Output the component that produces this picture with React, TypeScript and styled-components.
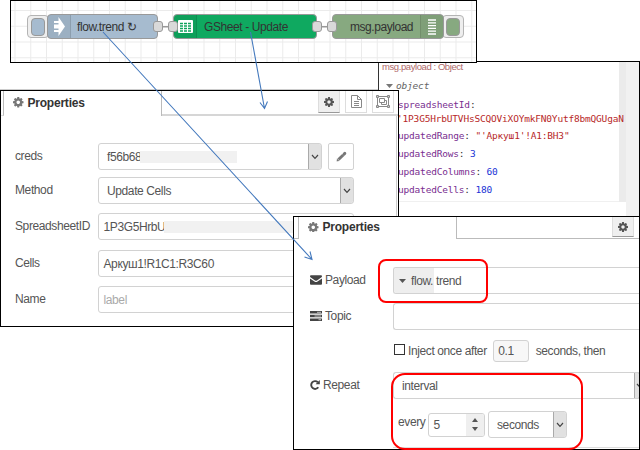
import React from 'react';
import styled, { createGlobalStyle, css } from 'styled-components';

const Global = createGlobalStyle`
  * { box-sizing: border-box; }
  body { margin: 0; background: #fff; font-family: "Liberation Sans", Arial, sans-serif; }
`;

const Desktop = styled.main`
  position: relative;
  width: 640px;
  height: 450px;
  overflow: hidden;
  background: #fff;
  color: #555;
  font-size: 12px;
`;

/* ---------- windows ---------- */

const Win = styled.section<{ $x: number; $y: number; $w: number; $h: number }>`
  position: absolute;
  isolation: isolate;
  left: ${p => p.$x}px;
  top: ${p => p.$y}px;
  width: ${p => p.$w}px;
  height: ${p => p.$h}px;
  overflow: hidden;
  border: 1px solid #000;
  background: #fff;
`;

const Console = styled(Win)`
  display: flex;
  border-left: 1px solid #333;
`;

const Backline = styled.div`
  width: 378px;
  height: 90px;
  border-bottom: 1px solid #ccc;
`;

const Text = styled.span<{ $ls?: number }>`
  font-size: 12px;
  letter-spacing: ${p => p.$ls ?? -0.39}px;
  line-height: 16px;
  white-space: pre;
`;

/* ---------- flow canvas ---------- */

const Canvas = styled(Win)`
  background-image:
    linear-gradient(90deg, #ebebeb 1px, transparent 1px),
    linear-gradient(180deg, #ebebeb 1px, transparent 1px);
  background-size: 15.75px 15.75px;
  background-position: 3.5px 9px;
`;

const Flow = styled.div`
  display: flex;
  align-items: center;
  height: 25px;
  margin: 13px 0 0 16px;
`;

const NodeButton = styled.div<{ $side: 'left' | 'right'; $c: string }>`
  width: 22px;
  height: 23px;
  border: 1.5px solid #b4b4b4;
  border-radius: 4px;
  background: #eee;
  display: flex;
  align-items: center;
  padding: 0 3px;
  justify-content: ${p => (p.$side === 'left' ? 'flex-start' : 'flex-end')};
  ${p => (p.$side === 'left' ? css`margin-right: -2px;` : css`margin-left: -2px;`)}
  &::after {
    content: '';
    width: 14px;
    height: 16px;
    border: 1px solid #999;
    border-radius: 4px;
    background: ${p => p.$c};
  }
`;

const Node = styled.div<{ $w: number; $c: string }>`
  position: relative;
  z-index: 1;
  flex: none;
  display: flex;
  align-items: center;
  width: ${p => p.$w}px;
  height: 25px;
  overflow: hidden;
  border: 1.5px solid #999;
  border-radius: 4px;
  background: ${p => p.$c};
  color: #333;
`;

const NodeIcon = styled.div<{ $right?: boolean }>`
  flex: none;
  display: flex;
  align-items: center;
  justify-content: center;
  width: 23px;
  height: 100%;
  background: rgba(0, 0, 0, 0.06);
  ${p => (p.$right ? 'border-left' : 'border-right')}: 1px solid rgba(0, 0, 0, 0.1);
`;

const NodeLabel = styled(Text)<{ $pad: number }>`
  flex: 1;
  padding-left: ${p => p.$pad}px;
`;

const Wire = styled.div`
  position: relative;
  z-index: 2;
  flex: none;
  display: flex;
  align-items: center;
  justify-content: space-between;
  width: 25px;
  height: 9px;
  margin: 0 -5px;
  background: linear-gradient(#999, #999) 0 4px / 100% 1.5px no-repeat;
  &::before, &::after {
    content: '';
    width: 8px;
    height: 9px;
    border: 1px solid #999;
    border-radius: 3px;
    background: #d9d9d9;
  }
`;

/* ---------- debug output ---------- */

const Log = styled.div`
  position: relative;
  z-index: 1;
  flex: none;
  width: 240px;
  height: 140px;
  padding-left: 3px;
  border-bottom: 1px solid #f0f0f0;
`;
const LogTitle = styled.div`
  height: 14px;
  margin-top: -3px;
  padding-top: 1px;
  color: #b06a6a;
  font-size: 9.5px;
  line-height: 14px;
  letter-spacing: -0.42px;
`;
const Mono = styled.div<{ $h: number; $indent?: number }>`
  height: ${p => p.$h}px;
  line-height: ${p => p.$h}px;
  padding-left: ${p => p.$indent ?? 9.5}px;
  font-family: "DejaVu Sans Mono", monospace;
  font-size: 9.5px;
  letter-spacing: -0.19px;
  white-space: pre;
  color: #333;
`;
const Key = styled.span`color: #792e90;`;
const Str = styled.span`color: #b72828;`;
const Num = styled.span`color: #2033d6;`;
const IdValue = styled(Mono)`
  margin-bottom: 2px;
`;
const ObjectRow = styled(Mono)`
  display: flex;
  align-items: center;
  gap: 3px;
`;
const ObjectName = styled.i`color: #666;`;
const LogEdge = styled.div`
  width: 7px;
  height: 140px;
  background: #ebebeb;
`;
const LogScroll = styled.div`
  width: 13px;
  background: #f1f1f1;
`;

/* ---------- property sheets ---------- */

const TabBar = styled.header<{ $h: number; $lead: number; $line: string }>`
  display: flex;
  height: ${p => p.$h}px;
  &::before {
    content: '';
    flex: none;
    width: ${p => p.$lead}px;
    border-right: 1px solid #bbb;
    border-bottom: 1px solid ${p => p.$line};
  }
`;
const Tab = styled.div<{ $w: number }>`
  flex: none;
  display: flex;
  align-items: center;
  gap: 4px;
  width: ${p => p.$w}px;
  padding: 0 0 2px 9px;
  border-right: 1px solid #bbb;
  color: #333;
  font-weight: bold;
`;
const TabTools = styled.div<{ $line: string; $pad: number; $thick?: boolean }>`
  flex: 1;
  display: flex;
  justify-content: flex-end;
  gap: 5px;
  padding-right: ${p => p.$pad}px;
  border-bottom: ${p => (p.$thick ? 2 : 1)}px solid ${p => p.$line};
`;
const Tool = styled.div<{ $active?: boolean; $h?: number }>`
  display: flex;
  align-items: center;
  justify-content: center;
  width: 22px;
  height: ${p => p.$h ?? 22}px;
  border: 1px solid #ddd;
  border-top: 0;
  background: #fff;
  ${p => p.$active && css`background: #efefef; border-bottom: 1px solid #999;`}
`;
const Form = styled.div<{ $pad: string }>`
  display: flex;
  flex-direction: column;
  padding: ${p => p.$pad};
`;
const SheetEdge = styled(Win)`
  & > ${Form} {
    height: 100%;
    margin-right: 1px;
    border-right: 1px solid #ccc;
  }
`;
const Row = styled.div<{ $gap: number; $label: number }>`
  flex: none;
  display: grid;
  grid-template-columns: ${p => p.$label}px 1fr;
  align-items: center;
  height: 27px;
  margin-bottom: ${p => p.$gap}px;
`;
const Caption = styled.label`
  display: flex;
  align-items: center;
  gap: 3px;
  padding-bottom: 2px;
`;
const Controls = styled.div`
  display: flex;
  align-items: center;
`;
const Box = styled.div<{ $w?: number; $h?: number; $pad?: number; $open?: boolean }>`
  flex: ${p => (p.$w ? 'none' : 1)};
  display: flex;
  align-items: center;
  width: ${p => (p.$w ? `${p.$w}px` : 'auto')};
  height: ${p => p.$h ?? 27}px;
  padding-left: ${p => p.$pad ?? 4.5}px;
  border: 1px solid #d2d2d2;
  border-radius: 3px;
  background: #fff;
  overflow: hidden;
  ${p => p.$open && css`border-right: 0; border-radius: 3px 0 0 3px;`}
`;
const Redaction = styled.div<{ $w: number }>`
  width: ${p => p.$w}px;
  height: 12px;
  margin-left: -1px;
  background: #f1f1f1;
`;
const Arrow = styled.div<{ $w?: number }>`
  flex: none;
  display: flex;
  align-items: center;
  justify-content: ${p => (p.$w ? 'flex-start' : 'center')};
  width: ${p => p.$w ?? 14}px;
  height: calc(100% + 2px);
  margin: -1px -1px -1px auto;
  border: 1px solid #aaa;
  border-radius: 0 2px 2px 0;
  background: #e1e1e1;
  overflow: hidden;
  & > svg { flex: none; ${p => p.$w && 'margin-left: 1px;'} }
`;
const EditButton = styled.div`
  display: flex;
  align-items: center;
  justify-content: center;
  width: 26px;
  height: 27px;
  margin-left: 6px;
  border: 1px solid #d2d2d2;
  border-radius: 2px;
`;
const TypePrefix = styled.div`
  display: flex;
  align-items: center;
  gap: 5px;
  width: 40px;
  height: 100%;
  padding-left: 5px;
  margin-right: 2px;
  background: #eee;
`;
const Check = styled.div`
  width: 11px;
  height: 11px;
  margin: 0 3px 2px 1px;
  border: 1px solid #333;
`;
const Spin = styled.div`
  display: flex;
  flex-direction: column;
  align-items: center;
  justify-content: space-evenly;
  width: 18px;
  height: 100%;
  margin-left: auto;
  background: #efefef;
`;
const FormFoot = styled.div`
  height: 1px;
  margin: 9px 0 0 83px;
  background: #ddd;
`;
const Placeholder = styled(Text)`
  color: #aaa;
`;
const InjectDelay = styled(Box)`
  margin: 0 7px 0 3px;
  background: #f7f7f7;
`;
const Every = styled(Text)`
  width: 30px;
  padding-bottom: 5px;
`;
const UnitSelect = styled(Box)`
  margin-left: 3px;
`;

/* ---------- annotations over the windows ---------- */

const Highlight = styled.div<{ $x: number; $y: number; $w: number; $h: number; $r: number }>`
  position: absolute;
  left: ${p => p.$x}px;
  top: ${p => p.$y}px;
  width: ${p => p.$w}px;
  height: ${p => p.$h}px;
  border: 2px solid #f00;
  border-radius: ${p => p.$r}px;
`;
const Pointers = styled.svg`
  position: absolute;
  inset: 0;
`;

/* ---------- icons ---------- */

const Cog = ({ size = 10.5, color = '#777' }: { size?: number; color?: string }) => (
  <svg width={size} height={size} viewBox="0 128 1536 1536" fill={color}>
    <path d="M1024 896q0-106-75-181t-181-75-181 75-75 181 75 181 181 75 181-75 75-181zm512-109v222q0 12-8 23t-20 13l-185 28q-19 54-39 91 35 50 107 138 10 12 10 25t-9 23q-27 37-99 108t-94 71q-12 0-26-9l-138-108q-44 23-91 38-16 136-29 186-7 28-36 28h-222q-14 0-24.5-8.500t-11.5-21.500l-28-184q-49-16-90-37l-141 107q-10 9-25 9-14 0-25-11-126-114-165-168-7-10-7-23 0-12 8-23 15-21 51-66.500t54-70.500q-27-50-41-99l-183-27q-13-2-21-12.500t-8-23.500v-222q0-12 8-23t19-13l186-28q14-46 39-92-40-57-107-138-10-12-10-24 0-10 9-23 26-36 98.500-107.500t94.500-71.500q13 0 26 10l138 107q44-23 91-38 16-136 29-186 7-28 36-28h222q14 0 24.500 8.500t11.500 21.500l28 184q49 16 90 37l142-107q9-9 24-9 13 0 25 10 129 119 165 170 7 8 7 22 0 12-8 23-15 21-51 66.500t-54 70.500q26 50 41 98l183 28q13 2 21 12.500t8 23.500z" />
  </svg>
);
const Chevron = () => (
  <svg width="8" height="6" viewBox="0 0 8 6" fill="none" stroke="#444" strokeWidth="1.2">
    <path d="M1 1l3 3.300 3-3.300" />
  </svg>
);
const Doc = () => (
  <svg width="11" height="13" viewBox="0 0 11 13" fill="none" stroke="#888">
    <path d="M.5.5h6l4 4v8h-10zM6.500.5v4h4M3 6.500h5M3 8.500h5M3 10.500h5" />
  </svg>
);
const Group = () => (
  <svg width="14" height="13" viewBox="0 0 14 13" fill="none" stroke="#888">
    <path d="M2 1.500h10M2 11.500h10M1.500 2v9M12.500 2v9" />
    <path d="M.5.5h2v2h-2zM11.500.5h2v2h-2zM.5 10.500h2v2h-2zM11.500 10.500h2v2h-2z" fill="#ccc" />
    <path d="M3.500 3.500h5v4h-5zM8.500 5.500h2v4h-5v-2" />
  </svg>
);
const Pencil = () => (
  <svg width="11" height="11" viewBox="0 0 11 11" stroke="#777" fill="none">
    <path d="M2.500 8.500l4.700-4.500" strokeWidth="3" />
    <path d="M8 3.200l.8-.8" strokeWidth="3" strokeLinecap="round" />
    <path d="M.8 10.200l.4-2.400 2 2z" fill="#777" strokeWidth=".3" />
  </svg>
);
const Envelope = () => (
  <svg width="12" height="10" viewBox="0 0 12 10" fill="#444">
    <path d="M0 1.200Q0 .3 1 .3h10q1 0 1 .9 0 .8-.8 1.400L7 5.400q-1 .6-2 0L.8 2.600Q0 2 0 1.200zM0 3.500l4.500 3q1.500 1 3 0l4.500-3V9q0 .8-1 .8H1Q0 9.800 0 9z" />
  </svg>
);
const Tasks = () => (
  <svg width="12" height="10" viewBox="0 0 12 10">
    <path d="M0 0h12v2.600H0zM0 3.700h12v2.600H0zM0 7.400h12V10H0z" fill="#444" />
    <path d="M7 1.300h4M4.500 5h6.500M8.500 8.700H11" stroke="#ccc" strokeWidth=".9" />
  </svg>
);
const Repeat = () => (
  <svg width="10" height="10" viewBox="0 0 10 10">
    <path d="M8.300 7.300A3.900 3.900 0 1 1 7.800 2.200" fill="none" stroke="#444" strokeWidth="1.900" />
    <path d="M5.600 4.300h4.200V0z" fill="#444" />
  </svg>
);
const Caret = ({ up, w = 7, color = '#555' }: { up?: boolean; w?: number; color?: string }) => (
  <svg width={w} height="4" viewBox="0 0 8 4" preserveAspectRatio="none" fill={color}>
    <path d={up ? 'M0 4h8L4 0z' : 'M0 0h8L4 4z'} />
  </svg>
);
const InjectIcon = () => (
  <svg width="11" height="19" viewBox="0 0 11 19" fill="#fff">
    <path d="M0 4h4.500V0L11 9.500 4.500 19v-4H0v-2h4.500v-1.500H0v-4h4.500V6H0z" />
  </svg>
);
const SheetIcon = () => (
  <svg width="15" height="13" viewBox="0 0 15 13">
    <rect width="15" height="13" rx="1" fill="#fff" />
    <path d="M2 3.500h3M6 3.500h3M10 3.500h3M2 6h3M6 6h3M10 6h3M2 8.500h3M6 8.500h3M10 8.500h3M2 11h3M6 11h3M10 11h3" stroke="#0fa35c" strokeWidth="1.300" />
  </svg>
);
const DebugIcon = () => (
  <svg width="8" height="16" viewBox="0 0 8 16" stroke="#fff" strokeWidth="1.300">
    <path d="M0 1h8M0 3.800h8M0 6.600h8M0 9.400h8M0 12.200h8M0 15h8" />
  </svg>
);

const results: [string, string][] = [
  ['updatedRows', '3'],
  ['updatedColumns', '60'],
  ['updatedCells', '180'],
];

export default function App() {
  return (
    <>
      <Global />
      <Desktop>
        <Backline />

        <Console $x={378} $y={61} $w={262} $h={160}>
          <Log>
            <LogTitle>msg.payload : Object</LogTitle>
            <ObjectRow $h={25} $indent={4}><Caret w={7} color="#777" /><ObjectName>object</ObjectName></ObjectRow>
            <Mono $h={14} $indent={16}><Key>spreadsheetId</Key>:</Mono>
            <IdValue $h={13}><Str>"'1P3G5HrbUTVHsSCQOViXOYmkFN0Yutf8bmQGUgaN</Str></IdValue>
            <Mono $h={18} $indent={16}><Key>updatedRange</Key>: <Str>"'Аркуш1'!A1:BH3"</Str></Mono>
            {results.map(([k, v]) => (
              <Mono key={k} $h={18} $indent={16}><Key>{k}</Key>: <Num>{v}</Num></Mono>
            ))}
          </Log>
          <LogEdge />
          <LogScroll />
        </Console>

        <Canvas $x={10} $y={0} $w={467} $h={63}>
          <Flow>
            <NodeButton $side="left" $c="#a6bbcf" />
            <Node $w={111} $c="#a6bbcf">
              <NodeIcon><InjectIcon /></NodeIcon>
              <NodeLabel $pad={6} $ls={-0.43}>flow.trend ↻</NodeLabel>
            </Node>
            <Wire />
            <Node $w={144} $c="#0fa960">
              <NodeIcon><SheetIcon /></NodeIcon>
              <NodeLabel $pad={7} $ls={-0.4}>GSheet - Update</NodeLabel>
            </Node>
            <Wire />
            <Node $w={112} $c="#87a980">
              <NodeLabel $pad={17} $ls={-0.45}>msg.payload</NodeLabel>
              <NodeIcon $right><DebugIcon /></NodeIcon>
            </Node>
            <NodeButton $side="right" $c="#87a980" />
          </Flow>
        </Canvas>

        <SheetEdge $x={0} $y={90} $w={399} $h={237}>
          <TabBar $h={25} $lead={2} $line="#ddd">
            <Tab $w={158}><Cog /><Text $ls={-0.22}>Properties</Text></Tab>
            <TabTools $line="#d6d6d6" $pad={4} $thick>
              <Tool $active><Cog size={10} color="#555" /></Tool>
              <Tool><Doc /></Tool>
              <Tool><Group /></Tool>
            </TabTools>
          </TabBar>
          <Form $pad="27px 42px 0 14px">
            <Row $gap={7} $label={83}>
              <Caption><Text>creds</Text></Caption>
              <Controls>
                <Box $pad={8}><Text>f56b68</Text><Redaction $w={97} /><Arrow><Chevron /></Arrow></Box>
                <EditButton><Pencil /></EditButton>
              </Controls>
            </Row>
            <Row $gap={9} $label={83}>
              <Caption><Text>Method</Text></Caption>
              <Box $pad={8}><Text>Update Cells</Text><Arrow><Chevron /></Arrow></Box>
            </Row>
            <Row $gap={10} $label={83}>
              <Caption><Text>SpreadsheetID</Text></Caption>
              <Box><Text>1P3G5HrbU</Text><Redaction $w={200} /></Box>
            </Row>
            <Row $gap={9} $label={83}>
              <Caption><Text>Cells</Text></Caption>
              <Box><Text>Аркуш1!R1C1:R3C60</Text></Box>
            </Row>
            <Row $gap={0} $label={83}>
              <Caption><Text>Name</Text></Caption>
              <Box><Placeholder>label</Placeholder></Box>
            </Row>
          </Form>
        </SheetEdge>

        <Win $x={293} $y={216} $w={347} $h={234}>
          <TabBar $h={22} $lead={4} $line="#bbb">
            <Tab $w={158}><Cog /><Text $ls={-0.22}>Properties</Text></Tab>
            <TabTools $line="#bbb" $pad={5}>
              <Tool $active $h={20}><Cog size={10} color="#555" /></Tool>
            </TabTools>
          </TabBar>
          <Form $pad="28px 0 0 16px">
            <Row $gap={9} $label={83}>
              <Caption><Envelope /><Text>Payload</Text></Caption>
              <Box $pad={0} $open>
                <TypePrefix><Caret /><Text>flow.</Text></TypePrefix>
                <Text>trend</Text>
              </Box>
            </Row>
            <Row $gap={7} $label={83}>
              <Caption><Tasks /><Text>Topic</Text></Caption>
              <Box $open />
            </Row>
            <Row $gap={8} $label={83}>
              <span />
              <Controls>
                <Check /><Text>Inject once after </Text>
                <InjectDelay $w={36} $h={22}><Text>0.1</Text></InjectDelay>
                <Text>seconds, then</Text>
              </Controls>
            </Row>
            <Row $gap={12} $label={83}>
              <Caption><Repeat /><Text>Repeat</Text></Caption>
              <Box $pad={8} $open><Text>interval</Text><Arrow $w={6}><Chevron /></Arrow></Box>
            </Row>
            <Row $gap={0} $label={88}>
              <span />
              <Controls>
                <Every>every</Every>
                <Box $w={57} $h={24}><Text>5</Text><Spin><Caret up w={6} /><Caret w={6} /></Spin></Box>
                <UnitSelect $w={79} $pad={8}><Text>seconds</Text><Arrow><Chevron /></Arrow></UnitSelect>
              </Controls>
            </Row>
            <FormFoot />
          </Form>
        </Win>

        <Highlight $x={378} $y={259} $w={110} $h={44} $r={8} />
        <Highlight $x={391} $y={373} $w={192} $h={77} $r={14} />
        <Pointers width="640" height="450" fill="none" stroke="#4479bd" strokeWidth="1.100">
          <path d="M103 32L312 259.500M304.500 257l7.500 2.500-2-8M250.500 32L264.500 108.500M260 102.500l4.500 6 3-7" />
        </Pointers>
      </Desktop>
    </>
  );
}
